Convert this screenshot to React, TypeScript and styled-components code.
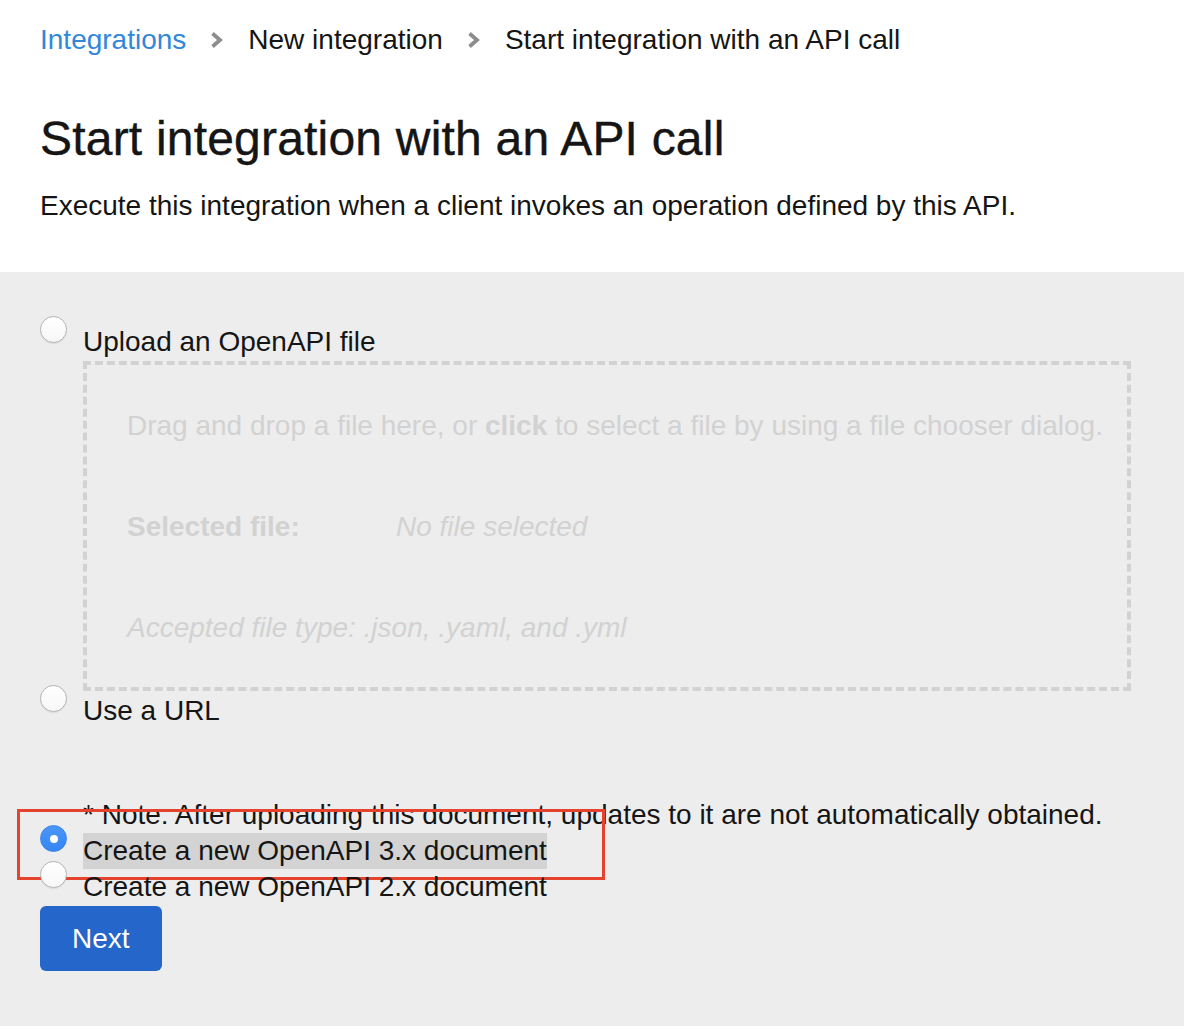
import React from "react";
import styled, { createGlobalStyle } from "styled-components";

const GlobalStyle = createGlobalStyle`
  html, body { margin: 0; padding: 0; }
  body {
    font-family: "Liberation Sans", Arial, sans-serif;
    color: #151515;
    background: #ededed;
  }
  * { box-sizing: border-box; }
`;

const Page = styled.div`
  display: flex;
  flex-direction: column;
  min-height: 100vh;
`;

const Header = styled.header`
  background: #ffffff;
  padding: 22px 40px 48px;
  display: flex;
  flex-direction: column;
`;

const Breadcrumb = styled.nav`
  display: flex;
  align-items: center;
  font-size: 28px;
  line-height: 36px;
  height: 36px;
`;

const Crumb = styled.span<{ $link?: boolean }>`
  color: ${(p) => (p.$link ? "#3187d8" : "#151515")};
`;

const Sep = styled.span`
  display: flex;
  align-items: center;
  margin: 0 25px 0 24px;
  color: #8b8d8f;
`;

const Title = styled.h1`
  margin: 52px 0 0;
  font-size: 48px;
  line-height: 58px;
  font-weight: 400;
  letter-spacing: 0.2px;
  -webkit-text-stroke: 0.4px #151515;
`;

const Description = styled.p`
  margin: 20px 0 0;
  font-size: 28px;
  line-height: 36px;
`;

const Body = styled.main`
  flex: 1;
  background: #ededed;
  padding: 52px 53px 40px 40px;
  display: flex;
  flex-direction: column;
  font-size: 28px;
  line-height: 36px;
`;

const OptionRow = styled.div<{ $mt?: number }>`
  position: relative;
  display: flex;
  align-items: flex-start;
  gap: 16px;
  margin-top: ${(p) => p.$mt ?? 0}px;
`;

const Radio = styled.span<{ $checked?: boolean }>`
  flex: none;
  width: 27px;
  height: 27px;
  margin-top: -8px;
  border-radius: 50%;
  display: flex;
  align-items: center;
  justify-content: center;
  background: ${(p) =>
    p.$checked ? "linear-gradient(#4a97fa, #3585f3)" : "linear-gradient(#ffffff, #f7f7f7)"};
  border: 1px solid ${(p) => (p.$checked ? "#3a82e8" : "#b3b3b3")};
  box-shadow: ${(p) => (p.$checked ? "none" : "0 1px 1px rgba(0,0,0,0.08)")};
  &::after {
    content: "";
    display: ${(p) => (p.$checked ? "block" : "none")};
    width: 8px;
    height: 8px;
    border-radius: 50%;
    background: #ffffff;
  }
`;

const OptionBody = styled.div`
  display: flex;
  flex-direction: column;
  flex: 1;
  min-width: 0;
`;

const Label = styled.span<{ $highlight?: boolean }>`
  align-self: flex-start;
  background: ${(p) => (p.$highlight ? "#d3d3d3" : "transparent")};
  white-space: nowrap;
`;

const DropZone = styled.div`
  margin-top: 1px;
  border: 4px dashed #d2d2d2;
  padding: 43px 40px 41px;
  display: flex;
  flex-direction: column;
  gap: 65px;
  color: #d2d2d2;
`;

const DropLine = styled.div`
  white-space: nowrap;
  strong { font-weight: 700; }
`;

const FileRow = styled.div`
  display: grid;
  grid-template-columns: 269px auto;
`;

const Muted = styled.span`
  font-style: italic;
`;

const Note = styled.div`
  margin: 68px 0 0 43px;
  white-space: nowrap;
`;

const Annotation = styled.div`
  position: absolute;
  left: -23px;
  top: -24px;
  width: 588px;
  height: 71px;
  border: 3px solid #e5432d;
  pointer-events: none;
`;

const NextButton = styled.button`
  align-self: flex-start;
  margin-top: 1px;
  height: 65px;
  padding: 0 32px;
  border: none;
  border-radius: 6px;
  background: #2566cb;
  color: #ffffff;
  font-family: "Liberation Sans", Arial, sans-serif;
  font-size: 28px;
  cursor: pointer;
`;

const Chevron = () => (
  <svg width="13" height="18" viewBox="0 0 13 18" aria-hidden="true">
    <polyline
      points="2.5,2.5 10,9 2.5,15.5"
      fill="none"
      stroke="currentColor"
      strokeWidth="3.8"
      strokeLinejoin="miter"
    />
  </svg>
);

export default function App() {
  return (
    <Page>
      <GlobalStyle />
      <Header>
        <Breadcrumb>
          <Crumb $link>Integrations</Crumb>
          <Sep>
            <Chevron />
          </Sep>
          <Crumb>New integration</Crumb>
          <Sep>
            <Chevron />
          </Sep>
          <Crumb>Start integration with an API call</Crumb>
        </Breadcrumb>
        <Title>Start integration with an API call</Title>
        <Description>
          Execute this integration when a client invokes an operation defined by this API.
        </Description>
      </Header>
      <Body>
        <OptionRow>
          <Radio />
          <OptionBody>
            <Label>Upload an OpenAPI file</Label>
            <DropZone>
              <DropLine>
                Drag and drop a file here, or <strong>click</strong> to select a file by using a
                file chooser dialog.
              </DropLine>
              <FileRow>
                <strong>Selected file:</strong>
                <Muted>No file selected</Muted>
              </FileRow>
              <DropLine>
                <Muted>Accepted file type: .json, .yaml, and .yml</Muted>
              </DropLine>
            </DropZone>
          </OptionBody>
        </OptionRow>
        <OptionRow $mt={2}>
          <Radio />
          <OptionBody>
            <Label>Use a URL</Label>
          </OptionBody>
        </OptionRow>
        <Note>* Note: After uploading this document, updates to it are not automatically obtained.</Note>
        <OptionRow>
          <Radio $checked />
          <OptionBody>
            <Label $highlight>Create a new OpenAPI 3.x document</Label>
          </OptionBody>
          <Annotation />
        </OptionRow>
        <OptionRow>
          <Radio />
          <OptionBody>
            <Label>Create a new OpenAPI 2.x document</Label>
          </OptionBody>
        </OptionRow>
        <NextButton>Next</NextButton>
      </Body>
    </Page>
  );
}
